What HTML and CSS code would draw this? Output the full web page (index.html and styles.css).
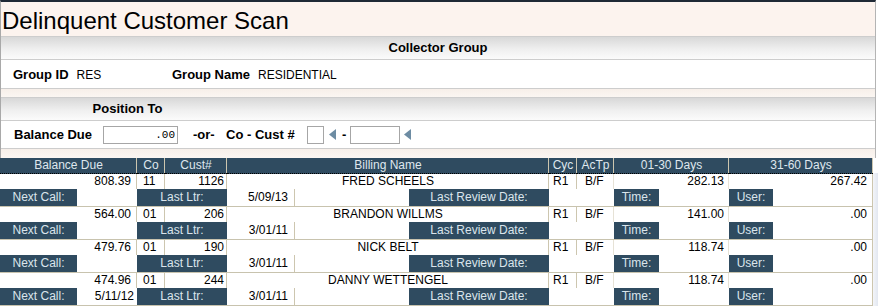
FILE: index.html
```html
<!DOCTYPE html>
<html>
<head>
<meta charset="utf-8">
<title>Delinquent Customer Scan</title>
<link rel="stylesheet" href="styles.css">
</head>
<body>
<div class="page">
  <div class="top">
    <h1 class="title">Delinquent Customer Scan</h1>
    <div class="band">Collector Group</div>
    <div class="group-row">
      <div class="field f1"><span class="lbl">Group ID</span><span class="val">RES</span></div>
      <div class="field"><span class="lbl">Group Name</span><span class="val">RESIDENTIAL</span></div>
    </div>
    <div class="gap"></div>
    <div class="band band-left"><span class="pos-title">Position To</span></div>
    <div class="pos-row">
      <span class="lbl w-bal">Balance Due</span>
      <input class="inp inp-bal" type="text" value=".00">
      <span class="lbl w-or">-or-</span>
      <span class="lbl w-co">Co - Cust #</span>
      <input class="inp inp-co" type="text" value="">
      <svg class="arrow" width="7" height="11" viewBox="0 0 7 11"><polygon points="7,0 0,5.5 7,11" fill="#6d8ca3"/></svg>
      <span class="lbl w-dash">-</span>
      <input class="inp inp-cust" type="text" value="">
      <svg class="arrow arrow2" width="7" height="11" viewBox="0 0 7 11"><polygon points="7,0 0,5.5 7,11" fill="#6d8ca3"/></svg>
    </div>
    <div class="gap gap2"></div>
  </div>
  <div class="grid-wrap">
    <table class="grid">
      <colgroup>
        <col class="c77"><col class="c60"><col class="c28"><col class="c62"><col class="c68"><col class="c114"><col class="c140"><col class="c28"><col class="c37"><col class="c45"><col class="c70"><col class="c44"><col class="c100">
      </colgroup>
      <tr class="hdr">
        <td colspan="2" class="s">Balance Due</td>
        <td class="s">Co</td>
        <td class="s">Cust#</td>
        <td colspan="3" class="s">Billing Name</td>
        <td class="s">Cyc</td>
        <td class="s">AcTp</td>
        <td colspan="2" class="s">01-30 Days</td>
        <td colspan="2" class="s">31-60 Days</td>
      </tr>

      <tr class="l1">
        <td colspan="2" class="num pr6 s">808.39</td>
        <td class="co s">11</td>
        <td class="num pr3 s">1126</td>
        <td colspan="3" class="ctr s">FRED SCHEELS</td>
        <td class="cyc s">R1</td>
        <td class="ac s2">B/F</td>
        <td colspan="2" class="num pr5 s2">282.13</td>
        <td colspan="2" class="num pr6 s">267.42</td>
      </tr>
      <tr class="l2">
        <td class="lab">Next Call:</td>
        <td class="num pr3"></td>
        <td colspan="2" class="lab">Last Ltr:</td>
        <td class="num pr7 s">5/09/13</td>
        <td></td>
        <td class="lab">Last Review Date:</td>
        <td colspan="2"></td>
        <td class="lab">Time:</td>
        <td></td>
        <td class="lab">User:</td>
        <td class="s"></td>
      </tr>

      <tr class="l1">
        <td colspan="2" class="num pr6 s">564.00</td>
        <td class="co s">01</td>
        <td class="num pr3 s">206</td>
        <td colspan="3" class="ctr s">BRANDON WILLMS</td>
        <td class="cyc s">R1</td>
        <td class="ac s2">B/F</td>
        <td colspan="2" class="num pr5 s2">141.00</td>
        <td colspan="2" class="num pr6 s">.00</td>
      </tr>
      <tr class="l2">
        <td class="lab">Next Call:</td>
        <td class="num pr3"></td>
        <td colspan="2" class="lab">Last Ltr:</td>
        <td class="num pr7 s">3/01/11</td>
        <td></td>
        <td class="lab">Last Review Date:</td>
        <td colspan="2"></td>
        <td class="lab">Time:</td>
        <td></td>
        <td class="lab">User:</td>
        <td class="s"></td>
      </tr>

      <tr class="l1">
        <td colspan="2" class="num pr6 s">479.76</td>
        <td class="co s">01</td>
        <td class="num pr3 s">190</td>
        <td colspan="3" class="ctr s">NICK BELT</td>
        <td class="cyc s">R1</td>
        <td class="ac s2">B/F</td>
        <td colspan="2" class="num pr5 s2">118.74</td>
        <td colspan="2" class="num pr6 s">.00</td>
      </tr>
      <tr class="l2">
        <td class="lab">Next Call:</td>
        <td class="num pr3"></td>
        <td colspan="2" class="lab">Last Ltr:</td>
        <td class="num pr7 s">3/01/11</td>
        <td></td>
        <td class="lab">Last Review Date:</td>
        <td colspan="2"></td>
        <td class="lab">Time:</td>
        <td></td>
        <td class="lab">User:</td>
        <td class="s"></td>
      </tr>

      <tr class="l1">
        <td colspan="2" class="num pr6 s">474.96</td>
        <td class="co s">01</td>
        <td class="num pr3 s">244</td>
        <td colspan="3" class="ctr s">DANNY WETTENGEL</td>
        <td class="cyc s">R1</td>
        <td class="ac s2">B/F</td>
        <td colspan="2" class="num pr5 s2">118.74</td>
        <td colspan="2" class="num pr6 s">.00</td>
      </tr>
      <tr class="l2">
        <td class="lab">Next Call:</td>
        <td class="num pr3">5/11/12</td>
        <td colspan="2" class="lab">Last Ltr:</td>
        <td class="num pr7 s">3/01/11</td>
        <td></td>
        <td class="lab">Last Review Date:</td>
        <td colspan="2"></td>
        <td class="lab">Time:</td>
        <td></td>
        <td class="lab">User:</td>
        <td class="s"></td>
      </tr>
    </table>
    <div class="filler"></div>
  </div>
</div>
</body>
</html>
```

FILE: styles.css
```css
* { box-sizing: border-box; }

body {
  margin: 0;
  background: #ffffff;
  color: #000000;
  font-family: "Liberation Sans", Arial, sans-serif;
  font-size: 12px;
}

.page {
  width: 878px;
}

.top {
  width: 876px;
  border-top: 2px solid #1f2935;
  border-left: 1px solid #a9a9a9;
  border-right: 1px solid #b4b4b4;
}

.title {
  margin: 0;
  height: 35px;
  padding: 4px 0 0 1px;
  font-family: "Liberation Sans", Arial, sans-serif;
  font-size: 24px;
  font-weight: normal;
  line-height: 30px;
  background: #fcf3ee;
  border-bottom: 1px solid #cdcdcd;
}

.band {
  height: 23px;
  border-bottom: 1px solid #cdcdcd;
  background: linear-gradient(#d8d8d8, #efefef 55%, #fbfbfb);
  font-weight: bold;
  font-size: 13px;
  line-height: 22px;
  text-align: center;
}

.band-left {
  text-align: left;
}

.pos-title {
  display: inline-block;
  width: 253px;
  text-align: center;
}

.group-row {
  height: 29px;
  border-bottom: 1px solid #cdcdcd;
  display: flex;
  align-items: center;
  padding-left: 12px;
}

.field {
  display: flex;
  align-items: baseline;
}

.f1 {
  width: 159px;
}

.lbl {
  font-weight: bold;
  font-size: 13px;
  white-space: nowrap;
}

.val {
  font-size: 12px;
  margin-left: 8px;
}

.gap {
  height: 9px;
  background: linear-gradient(#f7efe9, #fbf6f2);
  border-bottom: 1px solid #cdcdcd;
}

.gap2 {
  height: 9px;
  border-bottom: none;
}

.pos-row {
  height: 28px;
  border-bottom: 1px solid #cdcdcd;
  display: flex;
  align-items: center;
  padding-left: 13px;
}

.w-bal { width: 89px; }
.w-or { width: 22px; margin-left: 15px; }
.w-co { width: 69px; margin-left: 11px; }
.w-dash { width: 4px; margin-left: 6px; }

.inp {
  height: 18px;
  border: 1px solid #a6a6a6;
  background: #ffffff;
  padding: 0 2px;
  margin: 0;
  font-family: "Liberation Mono", "Courier New", monospace;
  font-size: 11px;
  color: #000;
  text-align: right;
  outline: none;
}

.inp-bal { width: 75px; margin-top: 1px; }
.inp-co { width: 17px; margin-left: 12px; margin-top: 1px; }
.inp-cust { width: 50px; margin-left: 4px; margin-top: 1px; }

.arrow { margin-left: 5px; display: block; }
.arrow2 { margin-left: 4px; }

.grid-wrap {
  display: flex;
  width: 878px;
}

.filler {
  flex: 1;
  margin-top: 15px;
  background: linear-gradient(to right, #f3f5f9, #e2e7f0);
}

.grid {
  width: 873px;
  table-layout: fixed;
  border-collapse: separate;
  border-spacing: 0;
  font-size: 12px;
}

.c77 { width: 77px; }
.c60 { width: 60px; }
.c28 { width: 28px; }
.c62 { width: 62px; }
.c68 { width: 68px; }
.c114 { width: 114px; }
.c140 { width: 140px; }
.c37 { width: 37px; }
.c45 { width: 45px; }
.c70 { width: 70px; }
.c44 { width: 44px; }
.c100 { width: 100px; }

.grid td {
  padding: 0;
  white-space: nowrap;
  overflow: hidden;
}

.hdr td {
  background: #2f4b60;
  color: #dfe7ee;
  text-align: center;
  line-height: 15px;
  border-bottom: 1px dotted #000000;
}

.grid .s { box-shadow: inset -1px 0 0 #cdc6af; }
.grid .s2 { box-shadow: inset -1px 0 0 #e6e2d6; }

.l1 td {
  line-height: 15px;
}

.l2 td {
  line-height: 17px;
  border-bottom: 1px solid #c8c3ae;
}

.grid .num { text-align: right; }
.grid .ctr { text-align: center; }
.grid .co { padding-left: 6px; }
.grid .cyc { padding-left: 4px; }
.grid .ac { padding-left: 8px; }
.grid .pr3 { padding-right: 3px; }
.grid .pr5 { padding-right: 5px; }
.grid .pr6 { padding-right: 6px; }
.grid .pr7 { padding-right: 7px; }

.grid .lab {
  background: #2f4b60;
  color: #dbe5ec;
  text-align: center;
}
```
